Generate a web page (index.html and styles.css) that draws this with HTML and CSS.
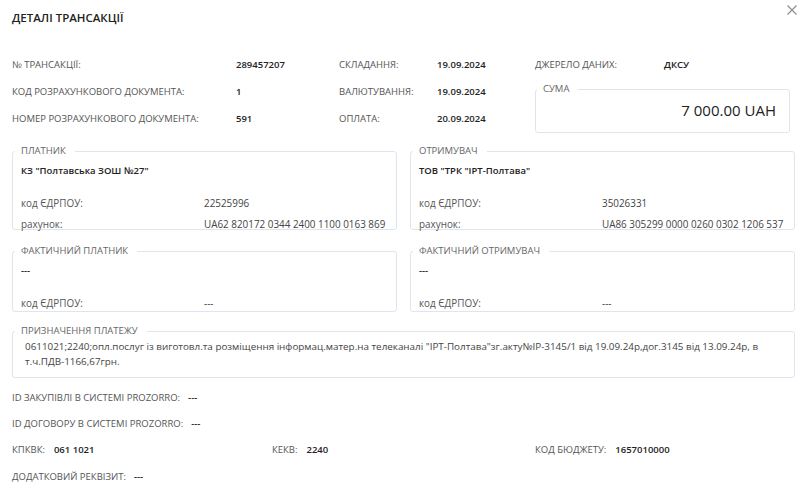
FILE: index.html
```html
<!DOCTYPE html>
<html lang="uk">
<head>
<meta charset="utf-8">
<title>Деталі трансакції</title>
<link rel="stylesheet" href="styles.css">
</head>
<body>
<div class="modal">
  <header class="head">
    <h1 class="title">ДЕТАЛІ ТРАНСАКЦІЇ</h1>
    <button class="close" aria-label="Закрити">
      <svg width="10" height="10" viewBox="0 0 10 10"><path d="M0.5 0.5L9.5 9.5M9.5 0.5L0.5 9.5" stroke="#8a8a8a" stroke-width="1.1" fill="none"/></svg>
    </button>
  </header>

  <section class="top">
    <div class="lbl">№ ТРАНСАКЦІЇ:</div>
    <div class="val">289457207</div>
    <div class="lbl">СКЛАДАННЯ:</div>
    <div class="val">19.09.2024</div>
    <div class="src"><span class="lbl src-l">ДЖЕРЕЛО ДАНИХ:</span><span class="val">ДКСУ</span></div>

    <div class="lbl">КОД РОЗРАХУНКОВОГО ДОКУМЕНТА:</div>
    <div class="val">1</div>
    <div class="lbl">ВАЛЮТУВАННЯ:</div>
    <div class="val">19.09.2024</div>
    <fieldset class="box sum">
      <legend>СУМА</legend>
      <div class="amount">7 000.00 UAH</div>
    </fieldset>

    <div class="lbl">НОМЕР РОЗРАХУНКОВОГО ДОКУМЕНТА:</div>
    <div class="val">591</div>
    <div class="lbl">ОПЛАТА:</div>
    <div class="val">20.09.2024</div>
  </section>

  <section class="parties">
    <fieldset class="box party">
      <legend>ПЛАТНИК</legend>
      <div class="name">КЗ "Полтавська ЗОШ №27"</div>
      <div class="kv"><span class="lbl">код ЄДРПОУ:</span><span class="txt">22525996</span></div>
      <div class="kv"><span class="lbl">рахунок:</span><span class="txt">UA62 820172 0344 2400 1100 0163 869</span></div>
    </fieldset>
    <fieldset class="box party">
      <legend>ОТРИМУВАЧ</legend>
      <div class="name">ТОВ "ТРК "ІРТ-Полтава"</div>
      <div class="kv"><span class="lbl">код ЄДРПОУ:</span><span class="txt">35026331</span></div>
      <div class="kv"><span class="lbl">рахунок:</span><span class="txt">UA86 305299 0000 0260 0302 1206 537</span></div>
    </fieldset>
    <fieldset class="box party fact">
      <legend>ФАКТИЧНИЙ ПЛАТНИК</legend>
      <div class="name">---</div>
      <div class="kv"><span class="lbl">код ЄДРПОУ:</span><span class="txt">---</span></div>
    </fieldset>
    <fieldset class="box party fact">
      <legend>ФАКТИЧНИЙ ОТРИМУВАЧ</legend>
      <div class="name">---</div>
      <div class="kv"><span class="lbl">код ЄДРПОУ:</span><span class="txt">---</span></div>
    </fieldset>
  </section>

  <fieldset class="box purpose">
    <legend>ПРИЗНАЧЕННЯ ПЛАТЕЖУ</legend>
    <p class="ptext">0611021;2240;опл.послуг із виготовл.та розміщення інформац.матер.на телеканалі "ІРТ-Полтава"зг.акту№ІР-3145/1 від 19.09.24р,дог.3145 від 13.09.24р, в т.ч.ПДВ-1166,67грн.</p>
  </fieldset>

  <section class="bottom">
    <div class="brow"><span class="lbl">ID ЗАКУПІВЛІ В СИСТЕМІ PROZORRO:</span><span class="val">---</span></div>
    <div class="brow"><span class="lbl">ID ДОГОВОРУ В СИСТЕМІ PROZORRO:</span><span class="val">---</span></div>
    <div class="brow tri">
      <div><span class="lbl">КПКВК:</span><span class="val">061 1021</span></div>
      <div><span class="lbl">КЕКВ:</span><span class="val">2240</span></div>
      <div><span class="lbl">КОД БЮДЖЕТУ:</span><span class="val">1657010000</span></div>
    </div>
    <div class="brow"><span class="lbl">ДОДАТКОВИЙ РЕКВІЗИТ:</span><span class="val">---</span></div>
  </section>
</div>
</body>
</html>
```
FILE: styles.css
```css
* { box-sizing: border-box; }
html, body { margin: 0; padding: 0; background: #fff; }
body {
  font-family: "Open Sans", "Noto Sans", "DejaVu Sans", sans-serif;
  font-size: 9.5px;
  color: #222;
  width: 800px;
  height: 490px;
  overflow: hidden;
}
.modal { padding: 0 5px 0 12px; }

.head {
  display: flex;
  justify-content: space-between;
  align-items: flex-start;
  height: 51px;
}
.title {
  margin: 11px 0 0;
  font-size: 11.5px;
  font-weight: 600;
  line-height: 14px;
  color: #222;
}
.close {
  border: 0;
  background: none;
  padding: 0;
  margin: 4px -3px 0 0;
  width: 12px;
  height: 12px;
  display: flex;
  align-items: center;
  justify-content: center;
}

.lbl { color: #555; }
.val { font-weight: 600; color: #222; }

.top {
  display: grid;
  grid-template-columns: 224px 103px 98px 98px 255px;
  grid-template-rows: 27px 27px 27px;
  align-items: center;
}
.src { display: flex; }
.src-l { width: 129px; }

.box {
  margin: 0;
  border: 1px solid #dfe4ef;
  border-radius: 3px;
  min-width: 0;
}
.box legend {
  color: #666;
  padding: 0 9px 0 6px;
  margin-left: -6px;
  line-height: 12px;
  font-size: 9.5px;
}
.sum {
  grid-column: 5;
  grid-row: 2 / span 2;
  align-self: end;
  height: 50px;
  padding: 0 13px 0 7px;
  margin-bottom: -1px;
}
.amount {
  text-align: right;
  font-size: 15px;
  line-height: 20px;
  color: #222;
  margin-top: 5px;
}

.parties {
  display: grid;
  grid-template-columns: 385px 385px;
  column-gap: 13px;
  row-gap: 15px;
  margin-top: 13px;
}
.party {
  padding: 0 9px 0 8px;
  height: 85px;
}
.party.fact { height: 67px; }
.name {
  font-weight: 600;
  line-height: 14px;
  margin-top: 7px;
  height: 28px;
}
.kv {
  display: grid;
  grid-template-columns: 1fr 1fr;
  line-height: 12px;
  height: 21px;
  align-items: center;
  font-size: 9.9px;
}
.kv .txt { color: #444; }

.purpose {
  margin-top: 13px;
  padding: 0 8px 0 12px;
  height: 53px;
}
.purpose legend { margin-left: -10px; }
.ptext {
  margin: 2px 0 0;
  line-height: 15px;
  font-size: 9.85px;
  color: #444;
}

.bottom { margin-top: 6px; }
.brow {
  height: 26.3px;
  display: flex;
  align-items: center;
}
.brow .lbl { margin-right: 8px; }
.tri > div { display: flex; }
.tri > div:nth-child(1) { width: 260px; }
.tri > div:nth-child(2) { width: 263px; }
.tri .lbl { margin-right: 9px; }
```
